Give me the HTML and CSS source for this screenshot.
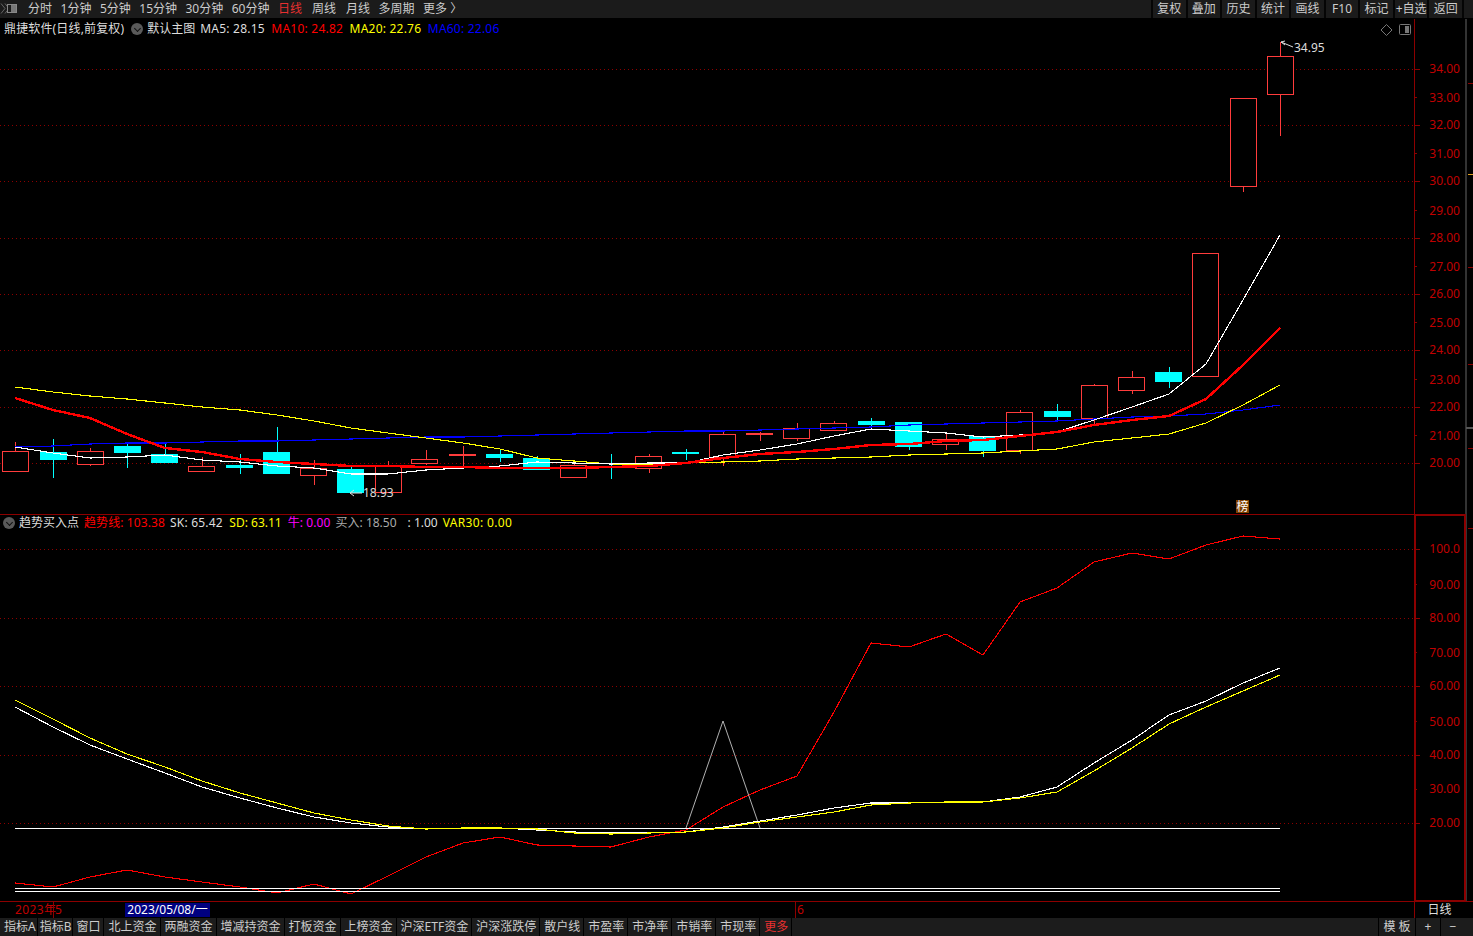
FILE: index.html
```html
<!DOCTYPE html>
<html lang="zh-CN">
<head>
<meta charset="utf-8">
<title>鼎捷软件 日线</title>
<link rel="stylesheet" href="styles.css">
</head>
<body>
<div class="app">
  <header class="toolbar">
    <svg class="logo" width="20" height="18" viewBox="0 0 20 18"><path class="logo-arrow" d="M1 3.5l4 5-4 5M5 3.5l4 5-4 5"/><rect class="logo-box" x="7.5" y="4.5" width="9" height="8"/><rect class="logo-fill" x="11" y="5" width="5" height="7"/></svg>
    <nav class="periods">
      <span>分时</span><span>1分钟</span><span>5分钟</span><span>15分钟</span><span>30分钟</span><span>60分钟</span><span class="on">日线</span><span class="shift">周线</span><span class="shift">月线</span><span>多周期</span><span>更多 〉</span>
    </nav>
    <nav class="tools">
      <span>复权</span><span>叠加</span><span>历史</span><span>统计</span><span>画线</span><span>F10</span><span>标记</span><span>+自选</span><span>返回</span>
    </nav>
  </header>

  <section class="pane pane-main">
    <div class="legend">
      <span class="grey title">鼎捷软件(日线,前复权)</span>
      <i class="chev"></i>
      <span class="grey">默认主图</span>
      <span class="grey ls">MA5: 28.15</span>
      <span class="red ls gap1">MA10: 24.82</span>
      <span class="yellow ls gap1">MA20: 22.76</span>
      <span class="blue ls gap1">MA60: 22.06</span>
    </div>
    <svg class="chart" width="1473" height="496" viewBox="0 19 1473 496">
      <path class="dots" d="M0 69.5H1415M0 125.5H1415M0 181.5H1415M0 238.5H1415M0 294.5H1415M0 350.5H1415M0 407.5H1415M0 463.5H1415"/>
      <g class="wick-r">
        <path d="M15.5 442V451M90.5 448V451M90.5 464V466M202.5 457V466M314.5 460V468M314.5 476V485M388.5 461V466M426.5 450V459M426.5 463V465M463.5 446V466M574.5 462V465M649.5 454V456M649.5 468V473M723.5 432V434M723.5 458V466M760.5 432V441M797.5 423V428M797.5 438V441M834.5 421V423M946.5 432V439M946.5 445V450M1020.5 410V412M1020.5 451V454M1094.5 384V385M1094.5 418V424M1132.5 371V377M1132.5 391V394M1243.5 187V192M1280.5 42V57M1280.5 95V136"/>
      </g>
      <g class="wick-c">
        <path d="M53.5 439V478M127.5 442V468M165.5 443V454M240.5 454V474M277.5 427V452M351.5 466V469M500.5 449V462M537.5 456V458M611.5 454V479M686.5 449V460M871.5 418V429M909.5 447V450M983.5 451V457M1057.5 404V420M1169.5 367V388"/>
      </g>
      <g class="up">
        <rect x="2.5" y="451.5" width="26" height="20"/>
        <rect x="77.5" y="451.5" width="26" height="13"/>
        <rect x="188.5" y="466.5" width="26" height="5"/>
        <rect x="300.5" y="468.5" width="26" height="7"/>
        <rect x="375.5" y="466.5" width="26" height="26"/>
        <rect x="411.5" y="459.5" width="26" height="4"/>
        <rect x="449.5" y="454.5" width="26" height="1"/>
        <rect x="560.5" y="465.5" width="26" height="12"/>
        <rect x="635.5" y="456.5" width="26" height="12"/>
        <rect x="709.5" y="434.5" width="26" height="23"/>
        <rect x="746.5" y="433.5" width="26" height="1"/>
        <rect x="783.5" y="428.5" width="26" height="10"/>
        <rect x="820.5" y="423.5" width="26" height="7"/>
        <rect x="932.5" y="439.5" width="26" height="5"/>
        <rect x="1006.5" y="412.5" width="26" height="38"/>
        <rect x="1081.5" y="385.5" width="26" height="33"/>
        <rect x="1118.5" y="377.5" width="26" height="13"/>
        <rect x="1192.5" y="253.5" width="26" height="123"/>
        <rect x="1230.5" y="98.5" width="26" height="88"/>
        <rect x="1267.5" y="56.5" width="26" height="38"/>
      </g>
      <g class="down">
        <rect x="40" y="452" width="27" height="8"/>
        <rect x="114" y="446" width="27" height="7"/>
        <rect x="151" y="454" width="27" height="9"/>
        <rect x="226" y="465" width="27" height="3"/>
        <rect x="263" y="452" width="27" height="22"/>
        <rect x="337" y="469" width="27" height="24"/>
        <rect x="486" y="454" width="27" height="4"/>
        <rect x="523" y="458" width="27" height="12"/>
        <rect x="597" y="466" width="27" height="1"/>
        <rect x="672" y="452" width="27" height="2"/>
        <rect x="858" y="421" width="27" height="4"/>
        <rect x="895" y="422" width="27" height="25"/>
        <rect x="969" y="436" width="27" height="15"/>
        <rect x="1044" y="411" width="27" height="6"/>
        <rect x="1155" y="372" width="27" height="10"/>
      </g>
      <polyline class="ma ma-blue" points="15,447 53,446 90,444 127,443 165,443 202,442 240,441 277,441 314,440 351,439 388,438 426,437 463,437 500,436 537,435 574,434 611,433 649,432 686,431 723,431 760,430 797,429 834,428 871,427 909,425 946,424 983,423 1020,422 1057,421 1094,419 1132,417 1169,416 1206,414 1243,410 1280,405"/>
      <polyline class="ma ma-yellow" points="15,387 53,392 90,396 127,399 165,403 202,407 240,410 277,415 314,421 351,428 388,433 426,438 463,443 500,449 537,458 574,461 611,464 649,465 686,463 723,462 760,461 797,459 834,458 871,457 909,455 946,454 983,453 1020,451 1057,449 1094,442 1132,438 1169,434 1206,423 1243,405 1280,385"/>
      <polyline class="ma ma-white" points="15,447 53,453 90,458 127,457 165,455 202,460 240,462 277,466 314,468 351,474 388,474 426,470 463,468 500,466 537,462 574,463 611,464 649,463 686,463 723,455 760,450 797,444 834,436 871,429 909,431 946,433 983,437 1020,435 1057,432 1094,420 1132,407 1169,394 1206,364 1243,300 1280,235"/>
      <polyline class="ma ma-red" points="15,398 53,410 90,418 127,434 165,448 202,452 240,459 277,462 314,464 351,466 388,466 426,467 463,467 500,468 537,468 574,468 611,467 649,466 686,463 723,458 760,454 797,452 834,449 871,445 909,444 946,441 983,440 1020,436 1057,432 1094,425 1132,420 1169,416 1206,399 1243,365 1280,328"/>
      <path class="pointer" d="M1281 42l12 5M1281 42l4-1M1281 42l4 3M350 493h12M350 493l4-3M350 493l4 3"/>
      <text class="note" x="1294" y="52">34.95</text>
      <text class="note" x="363" y="497">18.93</text>
      <rect class="badge" x="1236" y="500" width="13" height="13"/>
      <text class="badge-t" x="1236.5" y="511">榜</text>
      <path class="icon" d="M1386.5 24.5l5.5 5.5-5.5 5.5-5.5-5.5z"/>
      <rect class="icon" x="1399.5" y="24.5" width="11" height="10" rx="1"/>
      <rect class="icon-fill" x="1405" y="26" width="4" height="7"/>
      <path class="axis" d="M1414.5 19V515M1414 69.5h6M1414 125.5h6M1414 181.5h6M1414 238.5h6M1414 294.5h6M1414 350.5h6M1414 407.5h6M1414 463.5h6M1414 97.5h3M1414 153.5h3M1414 210.5h3M1414 266.5h3M1414 322.5h3M1414 379.5h3M1414 435.5h3M1468 83.5h5M1468 267.5h5M1468 364.5h5M1468 448.5h5"/>
      <path class="frame" d="M0 514.5H1415"/>
      <path class="mark-o" d="M1468 174.5h5"/>
      <path class="rail" d="M1466 19V515"/>
      <path class="mark-g" d="M1466 427.5h7"/>
      <g class="tick">
        <text x="1460" y="73">34.00</text><text x="1460" y="102">33.00</text><text x="1460" y="129">32.00</text><text x="1460" y="158">31.00</text><text x="1460" y="185">30.00</text><text x="1460" y="215">29.00</text><text x="1460" y="242">28.00</text><text x="1460" y="271">27.00</text><text x="1460" y="298">26.00</text><text x="1460" y="327">25.00</text><text x="1460" y="354">24.00</text><text x="1460" y="384">23.00</text><text x="1460" y="411">22.00</text><text x="1460" y="440">21.00</text><text x="1460" y="467">20.00</text>
      </g>
    </svg>
  </section>

  <section class="pane pane-sub">
    <div class="legend">
      <i class="chev"></i>
      <span class="grey">趋势买入点</span>
      <span class="red ls1">趋势线: 103.38</span>
      <span class="grey ls2">SK: 65.42</span>
      <span class="yellow gap1">SD: 63.11</span>
      <span class="magenta ls1 gap-m">牛: 0.00</span>
      <span class="dim">买入: 18.50</span>
      <span class="grey colon">: 1.00</span>
      <span class="yellow ls3">VAR30: 0.00</span>
    </div>
    <svg class="chart chart-sub" width="1473" height="386" viewBox="0 515 1473 386">
      <path class="dots" d="M0 549.5H1415M0 618.5H1415M0 686.5H1415M0 755.5H1415M0 823.5H1415"/>
      <polyline class="line line-red" points="15,883 53,887 90,877 127,870 165,877 202,882 240,887 277,893 314,884 351,894 388,876 426,857 463,843 500,837 537,845 574,846 611,847 649,837 686,830 723,807 760,790 797,776 834,712 871,643 909,647 946,634 983,655 1020,602 1057,588 1094,562 1132,553 1169,559 1206,545 1243,536 1280,539"/>
      <path class="line-flat" d="M15 828.5H1280"/>
      <polyline class="spike" points="686,828 723,721 760,828"/>
      <polyline class="line line-white" points="15,707 53,727 90,745 127,759 165,773 202,787 240,798 277,808 314,817 351,823 388,827 426,829 463,828 500,828 537,830 574,832 611,833 649,833 686,832 723,827 760,821 797,815 834,808 871,803 909,803 946,802 983,802 1020,797 1057,787 1094,763 1132,740 1169,715 1206,701 1243,683 1280,668"/>
      <polyline class="line line-yellow" points="15,700 53,719 90,738 127,754 165,767 202,781 240,793 277,803 314,813 351,820 388,826 426,829 463,828 500,828 537,829 574,833 611,834 649,833 686,832 723,828 760,822 797,817 834,812 871,805 909,803 946,802 983,802 1020,798 1057,792 1094,771 1132,748 1169,724 1206,707 1243,691 1280,675"/>
      <path class="line-flat" d="M15 888.5H1280M15 891.5H1280"/>
      <path class="axis" d="M1414 549.5h6M1414 618.5h6M1414 686.5h6M1414 755.5h6M1414 823.5h6M1414 584.5h3M1414 652.5h3M1414 721.5h3M1414 789.5h3M1468 528.5h5"/>
      <rect class="frame-thick" x="1415" y="515" width="50" height="386"/>
      <path class="rail rail-sub" d="M1466.5 515V901"/>
      <g class="tick">
        <text x="1460" y="553">100.0</text><text x="1460" y="589">90.00</text><text x="1460" y="622">80.00</text><text x="1460" y="657">70.00</text><text x="1460" y="690">60.00</text><text x="1460" y="726">50.00</text><text x="1460" y="759">40.00</text><text x="1460" y="793">30.00</text><text x="1460" y="827">20.00</text>
      </g>
    </svg>
  </section>

  <section class="datebar">
    <span class="year">2023年</span>
    <span class="month-a">5</span>
    <span class="cursor-date">2023/05/08/一</span>
    <span class="month-b">6</span>
    <span class="cycle">日线</span>
  </section>

  <footer class="tabs">
    <span class="t-a">指标A</span><span class="t-a">指标B</span><span class="t-w">窗口</span><span class="t-first">北上资金</span><span>两融资金</span><span>增减持资金</span><span>打板资金</span><span>上榜资金</span><span>沪深ETF资金</span><span>沪深涨跌停</span><span>散户线</span><span>市盈率</span><span>市净率</span><span>市销率</span><span>市现率</span><span class="more">更多</span>
    <div class="tabs-right">
      <span class="t-mod">模 板</span><span class="t-btn">+</span><span class="t-btn">−</span>
    </div>
  </footer>
</div>
</body>
</html>
```
FILE: styles.css
```css
* { box-sizing: border-box; }
html, body { margin: 0; padding: 0; background: #000; }
body { font: 12px/18px "Noto Sans", "Noto Sans CJK SC", sans-serif; color: #ccc; overflow: hidden; }
.app { width: 1473px; height: 936px; display: flex; flex-direction: column; }

.toolbar { height: 19px; flex: none; display: flex; align-items: center; background: #1b1b1b; border-bottom: 1px solid #000; }
.logo { flex: none; margin-right: 8px; }
.logo-arrow { fill: none; stroke: #666; stroke-width: 1; }
.logo-box { fill: #1b1b1b; stroke: #888; stroke-width: 1; }
.logo-fill { fill: #777; }
.periods { display: flex; gap: 8.5px; white-space: nowrap; }
.periods .on { color: #e83030; }
.periods .shift { margin-left: 1.5px; }
.tools { margin-left: auto; margin-right: 9px; width: 313px; display: grid; grid-template-columns: repeat(9, 1fr); border-left: 2px solid #050505; }
.tools span { text-align: center; border-right: 2px solid #050505; white-space: nowrap; }

.pane { position: relative; flex: none; }
.pane-main { height: 496px; }
.pane-sub { height: 386px; }
.chart { display: block; }
.chart-sub { overflow: visible; }
.legend { position: absolute; left: 4px; top: 1px; display: flex; align-items: center; gap: 5px; white-space: nowrap; line-height: 18px; z-index: 1; }
.pane-sub .legend { left: 3px; top: -1px; }
.grey { color: #ddd; }
.dim { color: #aaa; }
.red { color: #f00; }
.yellow { color: #ff0; }
.blue { color: #00f; }
.magenta { color: #f0f; }
.title { letter-spacing: .15px; }
.ls { letter-spacing: .22px; }
.ls1 { letter-spacing: .1px; }
.ls2 { letter-spacing: .2px; }
.ls3 { letter-spacing: .35px; }
.gap1 { margin-left: 1.5px; }
.gap-m { margin-left: 1px; }
.colon { margin-left: 6px; }
.chev { width: 12px; height: 12px; border-radius: 50%; background: #5a5a5a; position: relative; margin-left: 2px; margin-right: -1px; }
.pane-sub .chev { margin-left: 0; margin-right: -1px; }
.chev::after { content: ""; position: absolute; left: 4px; top: 3px; width: 4px; height: 4px; border-right: 1px solid #111; border-bottom: 1px solid #111; transform: rotate(45deg); }

.dots { fill: none; stroke: #8c0000; stroke-width: 1; stroke-dasharray: 1 3; shape-rendering: crispEdges; }
.wick-r { fill: none; stroke: #ff3c3c; shape-rendering: crispEdges; }
.wick-c { fill: none; stroke: #00ffff; shape-rendering: crispEdges; }
.up rect { fill: #000; stroke: #ff3c3c; stroke-width: 1; shape-rendering: crispEdges; }
.down rect { fill: #00ffff; shape-rendering: crispEdges; }
.ma, .line { fill: none; stroke-width: 1.1; shape-rendering: crispEdges; }
.ma-blue { stroke: #0000ff; }
.ma-yellow { stroke: #ffff00; }
.ma-white { stroke: #fff; }
.ma-red { stroke: #f00; stroke-width: 2.4; }
.line-red { stroke: #f00; }
.line-white { stroke: #fff; }
.line-yellow { stroke: #ff0; }
.line-flat { fill: none; stroke: #fff; stroke-width: 1; shape-rendering: crispEdges; }
.spike { fill: none; stroke: #ddd; stroke-width: .8; }
.pointer { fill: none; stroke: #ddd; stroke-width: 1; }
.note { fill: #ddd; font-size: 12px; }
.badge { fill: #804000; }
.badge-t { fill: #fff; font-size: 12px; }
.icon { fill: none; stroke: #777; stroke-width: 1; }
.icon-fill { fill: #777; }
.axis { fill: none; stroke: #8c0000; stroke-width: 1; shape-rendering: crispEdges; }
.frame { fill: none; stroke: #8c0000; stroke-width: 1; shape-rendering: crispEdges; }
.frame-thick { fill: none; stroke: #8c0000; stroke-width: 2; shape-rendering: crispEdges; }
.rail { fill: none; stroke: #333; stroke-width: 2; shape-rendering: crispEdges; }
.rail-sub { stroke-width: 1; }
.mark-o { fill: none; stroke: #e0a020; shape-rendering: crispEdges; }
.mark-g { fill: none; stroke: #555; stroke-width: 2; shape-rendering: crispEdges; }
.tick text { fill: #c00000; font-size: 12px; text-anchor: end; }

.datebar { height: 17px; flex: none; position: relative; border-top: 1px solid #8c0000; color: #c00000; line-height: 15px; font-size: 12px; }
.year { position: absolute; left: 15px; top: 0; letter-spacing: .4px; }
.month-a { position: absolute; left: 53px; top: 0; height: 16px; padding-left: 1px; border-left: 1px solid #8c0000; }
.month-b { position: absolute; left: 795px; top: 0; height: 16px; padding-left: 1px; border-left: 1px solid #8c0000; }
.cursor-date { position: absolute; left: 125px; top: 1px; width: 85px; height: 14px; line-height: 14px; background: #000080; color: #fff; text-align: center; }
.cycle { position: absolute; left: 1414px; top: 0; width: 50px; height: 16px; text-align: center; color: #ddd; border-left: 1px solid #8c0000; }

.tabs { height: 18px; flex: none; display: flex; align-items: center; background: #1c1c1c; padding-left: 2px; }
.tabs > span { height: 18px; padding: 0 3px 0 4px; border-right: 1px solid #000; white-space: nowrap; color: #ccc; }
.tabs > span.t-a { padding: 0 1px 0 2px; }
.tabs > span.t-w { padding: 0 2px 0 3px; }
.tabs > span.t-first { padding-left: 5px; }
.tabs > span.more { color: #e83030; }
.tabs-right { margin-left: auto; margin-right: 8px; display: flex; }
.tabs-right span { height: 18px; border-left: 1px solid #000; text-align: center; }
.t-mod { width: 37px; }
.t-btn { width: 25px; }
```
